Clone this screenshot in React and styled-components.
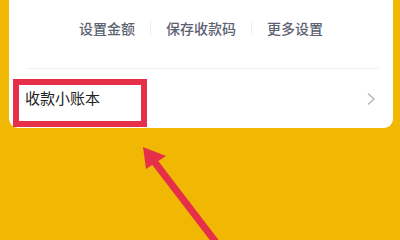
import React from 'react'
import styled, { createGlobalStyle } from 'styled-components'

const GlobalStyle = createGlobalStyle`
  html, body {
    margin: 0;
    padding: 0;
    background: #f1b803;
    font-family: "Noto Sans CJK SC", "Noto Sans", sans-serif;
  }
`;

const Screen = styled.div`
  position: relative;
  width: 400px;
  height: 240px;
  overflow: hidden;
  background: #f1b803;
  padding: 0 7px 0 9px;
  box-sizing: border-box;
`;

const Card = styled.div`
  background: #fff;
  border-radius: 0 0 9px 9px;
  height: 128px;
  display: flex;
  flex-direction: column;
`;

const Actions = styled.div`
  height: 55px;
  display: flex;
  align-items: center;
  justify-content: center;
`;

const Action = styled.span`
  font-size: 14px;
  font-weight: 500;
  color: #5c6272;
  padding: 0 15px;
  line-height: 1;
`;

const Sep = styled.span`
  width: 1px;
  height: 14px;
  background: #eceef1;
`;

const Divider = styled.div`
  height: 1px;
  background: #f0f0f2;
  margin: 13px 14px 0 18px;
`;

const Row = styled.div`
  flex: 1;
  display: flex;
  align-items: center;
  justify-content: space-between;
  padding: 0 17px 0 16px;
`;

const RowLabel = styled.span`
  font-size: 15px;
  color: #222;
  margin-top: -2px;
`;

const Highlight = styled.div`
  position: absolute;
  left: 13px;
  top: 79px;
  width: 134px;
  height: 48px;
  box-sizing: border-box;
  border: 6px solid #e6304a;
`;

const Arrow = styled.svg`
  position: absolute;
  left: 0;
  top: 0;
`;

export default function App() {
  return (
    <>
      <GlobalStyle />
      <Screen>
        <Card>
          <Actions>
            <Action>设置金额</Action>
            <Sep />
            <Action>保存收款码</Action>
            <Sep />
            <Action>更多设置</Action>
          </Actions>
          <Divider />
          <Row>
            <RowLabel>收款小账本</RowLabel>
            <svg width="10" height="14" viewBox="0 0 10 14">
              <path d="M2 1.5 L8 7 L2 12.5" fill="none" stroke="#b5b5b8" strokeWidth="1.4" />
            </svg>
          </Row>
        </Card>
        <Highlight />
        <Arrow width="400" height="240" viewBox="0 0 400 240">
          <line x1="153" y1="160" x2="218" y2="245" stroke="#e6304a" strokeWidth="7" />
          <polygon points="143,147 166,156 146,169" fill="#e6304a" />
        </Arrow>
      </Screen>
    </>
  )
}
